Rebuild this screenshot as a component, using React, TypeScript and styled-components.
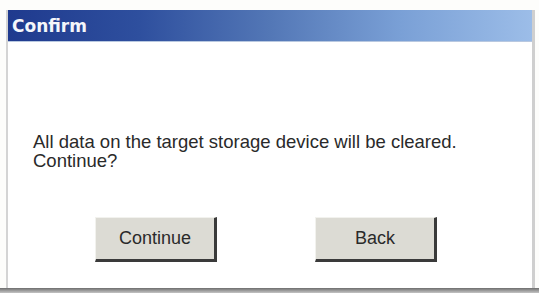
import React from "react";
import styled, { createGlobalStyle } from "styled-components";

const Global = createGlobalStyle`
  html, body { margin: 0; padding: 0; background: #ffffff; }
  body { width: 539px; height: 293px; overflow: hidden; }
`;

const Page = styled.div`
  width: 539px;
  height: 293px;
  display: flex;
  flex-direction: column;
  background: #fdfdfb;
`;

const Dialog = styled.div`
  flex: 1;
  margin: 10px 4px 0 6px;
  display: flex;
  flex-direction: column;
  border-left: 2px solid #d4d4d4;
  border-right: 3px solid #cfcfcf;
  background: #ffffff;
`;

const TitleBar = styled.div`
  height: 31px;
  display: flex;
  align-items: center;
  padding-left: 4px;
  background: linear-gradient(90deg, #1f3a8e 0%, #2e4f9e 25%, #5377b6 50%, #7aa0d6 75%, #9cbde8 100%);
  border-bottom: 1px solid #b8c8e0;
`;

const Title = styled.span`
  font-family: "DejaVu Sans", Verdana, sans-serif;
  font-weight: bold;
  font-size: 17px;
  color: #f4f6fa;
  letter-spacing: 0;
`;

const Body = styled.div`
  flex: 1;
  display: flex;
  flex-direction: column;
`;

const Message = styled.p`
  margin: 90px 0 0 25px;
  font-family: "Liberation Sans", Arial, sans-serif;
  font-size: 18.5px;
  line-height: 19px;
  color: #2a2a2a;
`;

const ButtonRow = styled.div`
  display: flex;
  gap: 98px;
  margin: 47px 0 0 87px;
`;

const Button = styled.button`
  width: 122px;
  height: 45px;
  padding: 0;
  background: #dcdbd4;
  border-style: solid;
  border-width: 1px 3px 3px 1px;
  border-color: #f2f2ee #3a3a3a #3a3a3a #f2f2ee;
  font-family: "Liberation Sans", Arial, sans-serif;
  font-size: 18px;
  color: #2a2a2a;
  cursor: pointer;
`;

const Footer = styled.div`
  height: 5px;
  background: linear-gradient(180deg, #6e6e6e 0%, #9a9a9a 50%, #c4c4c4 100%);
`;

export default function App() {
  return (
    <>
      <Global />
      <Page>
        <Dialog>
          <TitleBar>
            <Title>Confirm</Title>
          </TitleBar>
          <Body>
            <Message>
              All data on the target storage device will be cleared.
              <br />
              Continue?
            </Message>
            <ButtonRow>
              <Button>Continue</Button>
              <Button>Back</Button>
            </ButtonRow>
          </Body>
        </Dialog>
        <Footer />
      </Page>
    </>
  );
}
